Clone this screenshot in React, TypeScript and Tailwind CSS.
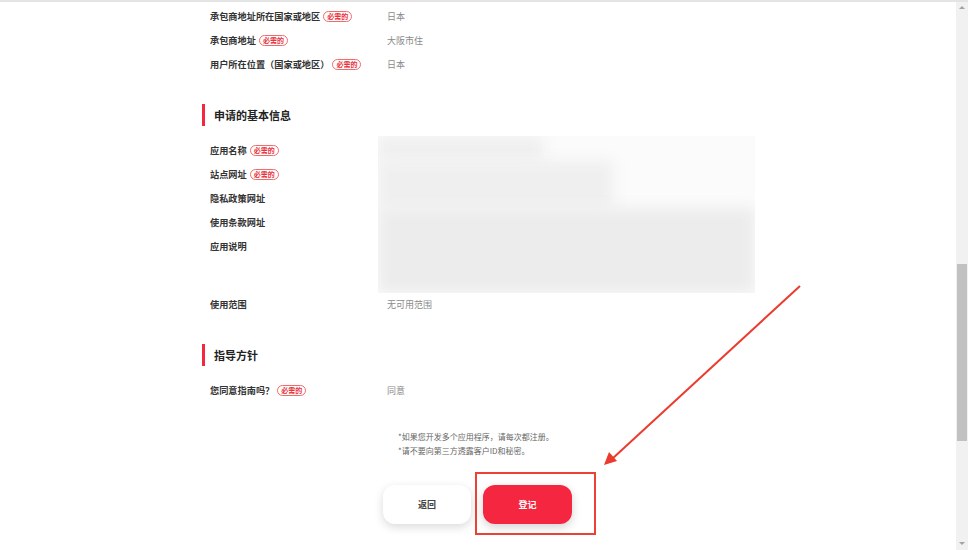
const font = { fontFamily: '"Noto Sans CJK SC", "Noto Sans", sans-serif' };

function Badge() {
  return (
    <span className="ml-[3px] inline-flex h-[11px] items-center rounded-full border border-[#f26a6a] px-[3px] text-[7px] leading-none font-bold text-[#e8323c]">
      必需的
    </span>
  );
}

function Row({ label, value, required }: { label: string; value?: string; required?: boolean }) {
  return (
    <div className="flex h-[24px] items-center">
      <div className="flex w-[185px] items-center pl-[8px] text-[9.2px] font-bold text-[#333]">
        {label}
        {required && <Badge />}
      </div>
      {value && <div className="text-[9px] text-[#8a8a8a]">{value}</div>}
    </div>
  );
}

function SectionTitle({ title }: { title: string }) {
  return (
    <div className="flex h-[22px] items-center gap-[9px]">
      <div className="h-full w-[3px] bg-[#f5263f]" />
      <h2 className="text-[11px] font-bold text-[#222]">{title}</h2>
    </div>
  );
}

export default function App() {
  return (
    <div style={font} className="flex h-[550px] w-[968px] overflow-hidden border-t-2 border-[#e4e4e4] bg-white">
      <main className="relative w-[956px] pt-[3px] pl-[202px]">
        {/* contractor info */}
        <Row label="承包商地址所在国家或地区" value="日本" required />
        <Row label="承包商地址" value="大阪市住" required />
        <Row label="用户所在位置（国家或地区）" value="日本" required />

        <div className="mt-[27px]">
          <SectionTitle title="申请的基本信息" />
        </div>

        <div className="mt-[10px] flex">
          <div className="w-[176px] pt-[3px]">
            <Row label="应用名称" required />
            <Row label="站点网址" required />
            <Row label="隐私政策网址" />
            <Row label="使用条款网址" />
            <Row label="应用说明" />
          </div>
          {/* blurred values */}
          <div className="flex h-[157px] w-[377px] flex-col overflow-hidden bg-[#fbfbfb]">
            <div className="h-[25px] w-[165px] bg-[#efefef] blur-[7px]" />
            <div className="h-[47px] w-[235px] bg-[#efefef] blur-[7px]" />
            <div className="h-[85px] w-full bg-[#ececec] blur-[7px]" />
          </div>
        </div>
        <Row label="使用范围" value="无可用范围" />

        <div className="mt-[27px]">
          <SectionTitle title="指导方针" />
        </div>
        <div className="mt-[13px]">
          <Row label="您同意指南吗？" value="同意" required />
        </div>

        <div className="mt-[28px] ml-[196px] space-y-[3px] text-[8px] leading-[11px] text-[#666]">
          <p>*如果您开发多个应用程序，请每次都注册。</p>
          <p>*请不要向第三方透露客户ID和秘密。</p>
        </div>

        <div className="mt-[29px] ml-[181px] flex gap-[12px]">
          <button className="h-[39px] w-[88px] rounded-[12px] bg-white text-[9px] font-bold text-[#444] shadow-[0_3px_10px_rgba(0,0,0,0.15)]">
            返回
          </button>
          <button className="h-[39px] w-[89px] rounded-[12px] bg-[#f5263f] text-[9px] font-bold text-white shadow-[0_3px_10px_rgba(0,0,0,0.18)]">
            登记
          </button>
        </div>

        {/* annotation */}
        <div className="absolute top-[470px] left-[475px] h-[63px] w-[121px] border-2 border-[#ea4335]" />
        <svg className="absolute top-0 left-0" width="956" height="550">
          <line x1="800" y1="284" x2="612" y2="457" stroke="#ea3b2e" strokeWidth="2" />
          <polygon points="604,463 609,450 617,459" fill="#ea3b2e" />
        </svg>
      </main>

      {/* scrollbar */}
      <div className="flex w-[12px] flex-col items-center bg-[#f1f1f1]">
        <div className="mt-[4px] h-0 w-0 border-x-[3px] border-b-[3px] border-x-transparent border-b-[#a3a3a3]" />
        <div className="mt-[255px] h-[177px] w-[10px] bg-[#c1c1c1]" />
        <div className="mt-auto mb-[5px] h-0 w-0 border-x-[3px] border-t-[3px] border-x-transparent border-t-[#a3a3a3]" />
      </div>
    </div>
  );
}
